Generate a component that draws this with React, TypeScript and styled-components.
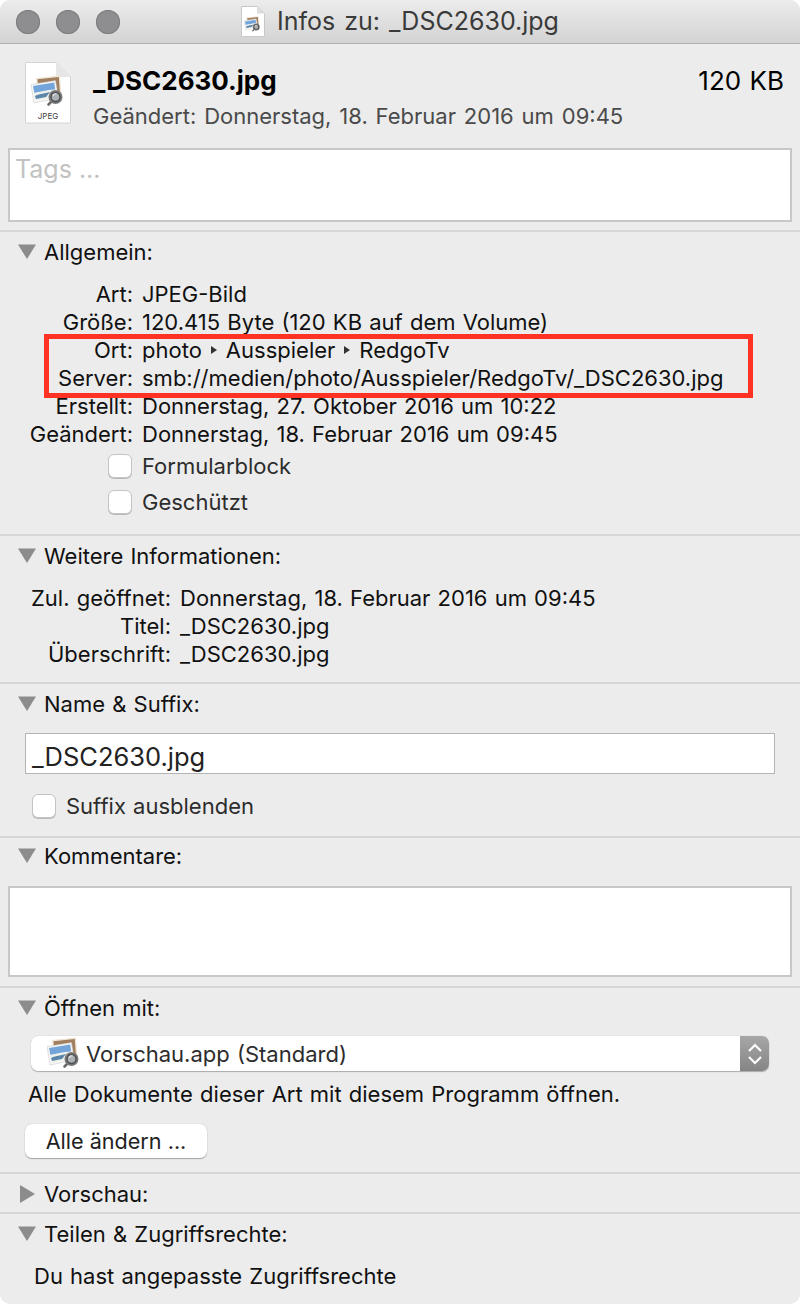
import React from "react";
import styled, { createGlobalStyle } from "styled-components";

const Global = createGlobalStyle`
  html, body { margin: 0; padding: 0; background: #fff; }
  body { font-family: Inter, "Liberation Sans", sans-serif; color: #111; }
`;

const Win = styled.div`
  width: 800px; height: 1304px; background: #ececec; overflow: hidden;
  border-radius: 10px; display: flex; flex-direction: column;
  font-size: 22px; word-spacing: 1px;
`;
const TitleBar = styled.div`
  height: 43px; flex: none; position: relative; display: flex; align-items: center; justify-content: center; gap: 12px;
  background: linear-gradient(#ececec, #d3d3d3); border-bottom: 1px solid #b0b0b0;
`;
const Lights = styled.div`
  position: absolute; left: 16px; top: 10px; display: flex; gap: 16px;
`;
const Light = styled.div`
  width: 24px; height: 24px; border-radius: 50%; background: #8e8d8f; box-shadow: inset 0 0 0 1px #7d7c7e;
`;
const TitleText = styled.span`
  font-size: 25px; word-spacing: 2px; color: #3a3a3a; line-height: 43px;
`;
const Header = styled.div`
  display: grid; grid-template-columns: auto 1fr auto; column-gap: 22px; padding: 18px 16px 0 24px; height: 86px; box-sizing: border-box; flex: none;
`;
const HeaderText = styled.div`display: flex; flex-direction: column; gap: 5px; padding-top: 4px;`;
const FileName = styled.div`font-size: 26px; font-weight: 700; line-height: 30px; color: #000; margin-left: -1px;`;
const Modified = styled.div`font-size: 22px; word-spacing: 1.7px; line-height: 30px; color: #4a4a4a; margin-left: -1px;`;
const Size = styled.div`font-size: 26px; line-height: 30px; padding-top: 4px; color: #000;`;

const BoxField = styled.div<{ $h: number; $top: number }>`
  margin: ${p => p.$top}px 8px 0; height: ${p => p.$h}px; box-sizing: border-box; background: #fff; border: 2px solid #c8c8c8; flex: none;
`;
const Placeholder = styled.div`
  font-size: 25px; word-spacing: 0; color: #c2c2c2; padding: 3px 0 0 5px; line-height: 32px;
`;

const Section = styled.section<{ $h: number; $top?: number }>`
  height: ${p => p.$h}px; box-sizing: border-box; flex: none; position: relative;
  margin-top: ${p => p.$top ?? 0}px; border-top: 2px solid #d7d7d7;
`;
const SectionHead = styled.div<{ $top?: number }>`
  display: flex; align-items: center; height: 28px; margin-top: ${p => p.$top ?? 6}px; padding-left: 18px; gap: 8px; line-height: 28px; color: #111;
`;
const Rows = styled.div<{ $col: number; $top: number }>`
  display: grid; grid-template-columns: ${p => p.$col}px 1fr; column-gap: 9px; grid-auto-rows: 28px; line-height: 28px; margin-top: ${p => p.$top}px; position: relative;
`;
const Label = styled.div`text-align: right; white-space: nowrap;`;
const Value = styled.div`white-space: nowrap; display: flex; align-items: center; gap: 9px;`;
const Highlight = styled.div`
  position: absolute; left: 44px; top: 54px; width: 709px; height: 64px; box-sizing: border-box; border: 5px solid #ff3224;
`;
const CheckRow = styled.label`
  display: flex; align-items: center; gap: 10px; height: 24px; color: #2c2c2c;
`;
const Check = styled.span`
  width: 24px; height: 24px; box-sizing: border-box; border-radius: 6px; background: #fff; border: 1px solid #c4c4c4; box-shadow: 0 1px 0 #b9b9b9;
`;
const CheckStack = styled.div<{ $left: number; $top: number }>`
  display: flex; flex-direction: column; gap: 12px; margin-top: ${p => p.$top}px; padding-left: ${p => p.$left}px;
`;
const NameInput = styled.div`
  margin: 15px 25px 0; height: 41px; box-sizing: border-box; background: #fff; border: 1px solid #b4b4b4; font-size: 25.5px; line-height: 46px; padding-left: 6px; color: #222;
`;
const Select = styled.div`
  margin: 14px 31px 0; height: 35px; box-sizing: border-box; background: #fff; border-radius: 7px; display: flex; align-items: center;
  box-shadow: 0 1px 1px #aaa, 0 0 1px #bbb; overflow: hidden; position: relative; padding-left: 16px; gap: 6px; color: #2c2c2c;
`;
const Stepper = styled.div`
  position: absolute; right: 0; top: 0; bottom: 0; width: 29px; background: linear-gradient(#a7a7a7, #858585); display: flex; align-items: center; justify-content: center;
`;
const Note = styled.div`margin: 9px 0 0 28px; line-height: 28px; color: #111;`;
const Btn = styled.button`
  display: block; margin: 16px 0 0 25px; width: 182px; height: 34px; box-sizing: border-box; border: 0; background: #fff; border-radius: 7px;
  box-shadow: 0 1px 1px #a5a5a5, 0 0 1px #b5b5b5; font: inherit; font-size: 21.6px; word-spacing: 0; color: #222; padding: 0; line-height: 34px;
`;
const Access = styled.div`margin: 14px 0 0 34px; line-height: 28px; color: #111;`;

const Tri = ({ open = true }: { open?: boolean }) => (
  <svg width="18" height="18" viewBox="0 0 18 18" style={{ flex: "none" }}>
    {open ? <path d="M0 1.5h18L9 16z" fill="#8c8c8c" /> : <path d="M2 0v18l15-9z" fill="#8c8c8c" />}
  </svg>
);
const Caret = () => (
  <svg width="6" height="8" viewBox="0 0 6 8" style={{ flex: "none" }}><path d="M0 0l6 4-6 4z" fill="#333" /></svg>
);
const PhotoArt = () => (
  <>
    <path d="M5 3L29 .5l1.5 21L7 23z" fill="#efe4d6" />
    <path d="M6.5 4.3L27.8 2l1.2 18L8 22z" fill="#a07e5e" />
    <path d="M0 9.5L24.5 5.5 27.5 23 3 28z" fill="#f6f6f6" stroke="#c4c4c4" strokeWidth=".5" />
    <path d="M2 11L23.2 7.5l1 7L3.4 18z" fill="#73a4da" />
    <path d="M3.4 18c6-1 12-3 20.8-3.5l1.2 7L4.6 26z" fill="#eef0ec" />
    <path d="M4 21c6-3 9-2 15-4l-4 5-10 2z" fill="#5b86aa" />
    <path d="M20 27l-2.5 2.5" stroke="#6a6a6a" strokeWidth="2.6" strokeLinecap="round" />
    <circle cx="24.5" cy="22" r="7" fill="#7a7a7a" />
    <circle cx="24.5" cy="22" r="5.2" fill="#4c4c4c" />
    <circle cx="24.5" cy="22" r="3.8" fill="#aab0b3" />
    <path d="M22 21a2.9 2.9 0 0 1 3.6-2.2" stroke="#f4f4f4" strokeWidth="1" fill="none" />
  </>
);
const PreviewIcon = ({ size }: { size: number }) => (
  <svg width={size} height={size} viewBox="0 0 33 33" style={{ flex: "none" }}><PhotoArt /></svg>
);
const DocIcon = () => (
  <svg width="48" height="62" viewBox="0 0 48 62" style={{ flex: "none" }}>
    <path d="M1.5 .5h30.5L46.5 15v46h-45z" fill="#fff" stroke="#d4d4d4" />
    <path d="M32 .5V15h14.5z" fill="#e6e6e6" />
    <g transform="translate(7,13)"><PhotoArt /></g>
    <text x="24" y="57" textAnchor="middle" fontSize="8" wordSpacing="0" fontFamily="Inter, sans-serif" fill="#444">JPEG</text>
  </svg>
);
const SmallDoc = () => (
  <svg width="24" height="31" viewBox="0 0 48 62" style={{ flex: "none" }}>
    <path d="M1 1h31L47 15v46H1z" fill="#fff" stroke="#c8c8c8" strokeWidth="2" />
    <path d="M32 1V15h15z" fill="#ddd" />
    <g transform="translate(6,20)"><PhotoArt /></g>
  </svg>
);

const Row = ({ l, children }: { l: string; children: React.ReactNode }) => (
  <><Label>{l}</Label><Value>{children}</Value></>
);

export default function App() {
  return (
    <Win>
      <Global />
      <TitleBar>
        <Lights><Light /><Light /><Light /></Lights>
        <SmallDoc />
        <TitleText>Infos zu: _DSC2630.jpg</TitleText>
      </TitleBar>
      <Header>
        <DocIcon />
        <HeaderText>
          <FileName>_DSC2630.jpg</FileName>
          <Modified>Geändert: Donnerstag, 18. Februar 2016 um 09:45</Modified>
        </HeaderText>
        <Size>120 KB</Size>
      </Header>
      <BoxField $h={74} $top={18}><Placeholder>Tags ...</Placeholder></BoxField>
      <Section $h={304} $top={8}>
        <SectionHead><Tri />Allgemein:</SectionHead>
        <Rows $col={133} $top={14}>
          <Row l="Art:">JPEG-Bild</Row>
          <Row l="Größe:">120.415 Byte (120 KB auf dem Volume)</Row>
          <Row l="Ort:">photo <Caret /> Ausspieler <Caret /> RedgoTv</Row>
          <Row l="Server:">smb://medien/photo/Ausspieler/RedgoTv/_DSC2630.jpg</Row>
          <Row l="Erstellt:">Donnerstag, 27. Oktober 2016 um 10:22</Row>
          <Row l="Geändert:">Donnerstag, 18. Februar 2016 um 09:45</Row>
          <Highlight />
        </Rows>
        <CheckStack $left={108} $top={6}>
          <CheckRow><Check />Formularblock</CheckRow>
          <CheckRow><Check />Geschützt</CheckRow>
        </CheckStack>
      </Section>
      <Section $h={148}>
        <SectionHead><Tri />Weitere Informationen:</SectionHead>
        <Rows $col={171} $top={14}>
          <Row l="Zul. geöffnet:">Donnerstag, 18. Februar 2016 um 09:45</Row>
          <Row l="Titel:">_DSC2630.jpg</Row>
          <Row l="Überschrift:">_DSC2630.jpg</Row>
        </Rows>
      </Section>
      <Section $h={154}>
        <SectionHead><Tri />Name &amp; Suffix:</SectionHead>
        <NameInput>_DSC2630.jpg</NameInput>
        <CheckStack $left={32} $top={20}><CheckRow><Check />Suffix ausblenden</CheckRow></CheckStack>
      </Section>
      <Section $h={150}>
        <SectionHead $top={4}><Tri />Kommentare:</SectionHead>
        <BoxField $h={91} $top={16} />
      </Section>
      <Section $h={186}>
        <SectionHead><Tri />Öffnen mit:</SectionHead>
        <Select>
          <PreviewIcon size={33} />
          Vorschau.app (Standard)
          <Stepper>
            <svg width="14" height="22" viewBox="0 0 14 22" fill="none" stroke="#fff" strokeWidth="2.2">
              <path d="M1 8l6-6 6 6M1 14l6 6 6-6" />
            </svg>
          </Stepper>
        </Select>
        <Note>Alle Dokumente dieser Art mit diesem Programm öffnen.</Note>
        <Btn>Alle ändern ...</Btn>
      </Section>
      <Section $h={40}>
        <SectionHead><Tri open={false} />Vorschau:</SectionHead>
      </Section>
      <Section $h={91}>
        <SectionHead><Tri />Teilen &amp; Zugriffsrechte:</SectionHead>
        <Access>Du hast angepasste Zugriffsrechte</Access>
      </Section>
    </Win>
  );
}
